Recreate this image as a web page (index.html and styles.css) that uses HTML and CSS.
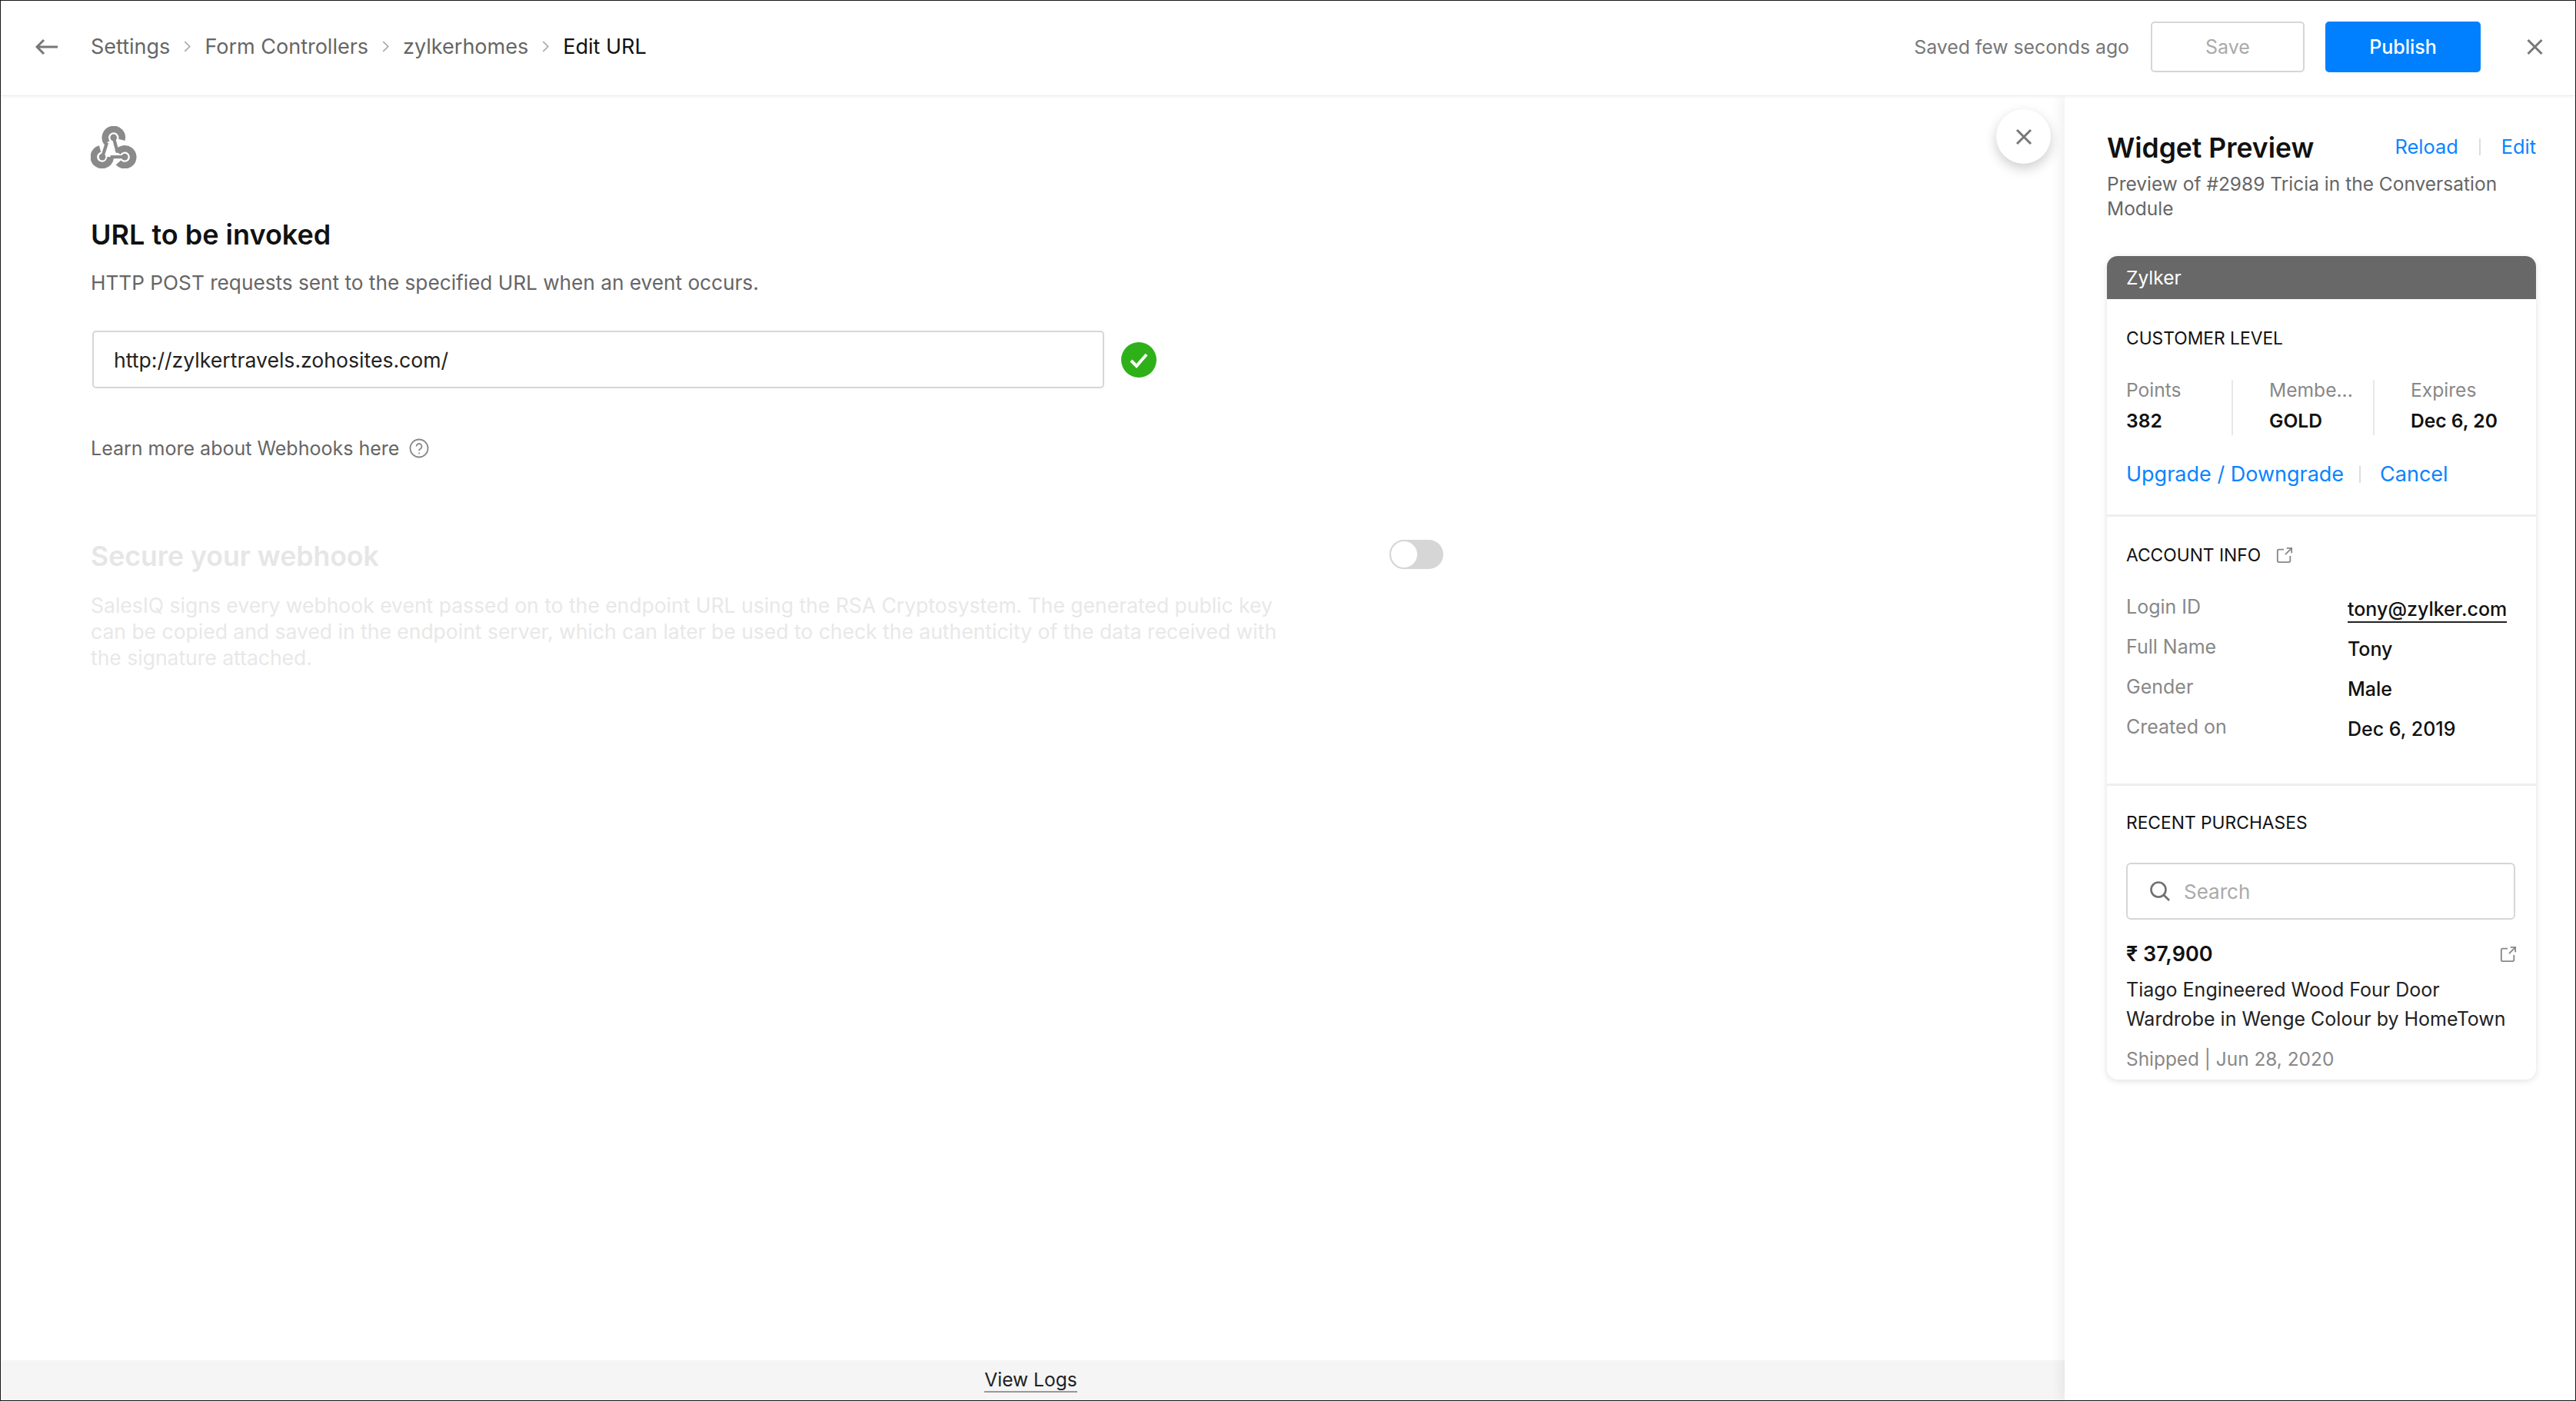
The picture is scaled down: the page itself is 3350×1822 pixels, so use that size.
FILE: index.html
```html
<!DOCTYPE html>
<html lang="en">
<head>
<meta charset="utf-8">
<title>Edit URL</title>
<link rel="stylesheet" href="styles.css">
</head>
<body>
<div class="app">
  <header class="topbar">
    <svg class="back" viewBox="0 0 30 24"><path d="M29 12H2M11 3l-9 9 9 9"/></svg>
    <nav class="crumbs">
      <span>Settings</span><svg class="chev" viewBox="0 0 8 14"><path d="M1 1l6 6-6 6"/></svg>
      <span>Form Controllers</span><svg class="chev" viewBox="0 0 8 14"><path d="M1 1l6 6-6 6"/></svg>
      <span>zylkerhomes</span><svg class="chev" viewBox="0 0 8 14"><path d="M1 1l6 6-6 6"/></svg>
      <span class="current">Edit URL</span>
    </nav>
    <span class="saved">Saved few seconds ago</span>
    <button class="btn btn-save">Save</button>
    <button class="btn btn-publish">Publish</button>
    <svg class="close-x" viewBox="0 0 22 22"><path d="M2 2l18 18M20 2L2 20"/></svg>
  </header>
  <div class="body">
    <main class="main">
      <div class="content">
        <svg class="hook" viewBox="173 72 180 166">
          <g class="hook-ring">
            <path d="M294 126A33 33 0 1 0 236 137"/>
            <path d="M209 161A33 33 0 1 0 250 193"/>
            <path d="M281 215A33 33 0 1 0 278 176"/>
          </g>
          <path class="hook-line" d="M236 137L218 193M250 193H306M278 176L262 117"/>
          <circle cx="262" cy="117" r="13"/><circle cx="218" cy="193" r="13"/><circle cx="306" cy="193" r="13"/>
        </svg>
        <h1 class="heading">URL to be invoked</h1>
        <p class="desc">HTTP POST requests sent to the specified URL when an event occurs.</p>
        <div class="url-row">
          <div class="url-input">http://zylkertravels.zohosites.com/</div>
          <svg class="ok" viewBox="0 0 46 46"><circle cx="23" cy="23" r="23"/><path d="M13 24l7 7 13-15"/></svg>
        </div>
        <p class="learn">Learn more about Webhooks here
          <svg class="help" viewBox="0 0 26 26"><circle cx="13" cy="13" r="11.5"/><path d="M9.5 10.5a3.5 3.5 0 1 1 5.4 3c-1.3.8-1.9 1.4-1.9 2.8"/><circle class="dot" cx="13" cy="19.5" r="1"/></svg>
        </p>
        <div class="secure">
          <div class="secure-head">
            <h2 class="heading muted">Secure your webhook</h2>
            <span class="toggle"><span class="knob"></span></span>
          </div>
          <p class="secure-text">SalesIQ signs every webhook event passed on to the endpoint URL using the RSA Cryptosystem. The generated public key can be copied and saved in the endpoint server, which can later be used to check the authenticity of the data received with the signature attached.</p>
        </div>
      </div>
      <button class="round-close"><svg viewBox="0 0 22 22"><path d="M2 2l18 18M20 2L2 20"/></svg></button>
      <footer class="logs"><a class="logs-link">View Logs</a></footer>
    </main>
    <aside class="side">
      <div class="side-head">
        <h2 class="side-title">Widget Preview</h2>
        <div class="side-links"><a>Reload</a><i class="sep"></i><a>Edit</a></div>
      </div>
      <p class="side-sub">Preview of #2989 Tricia in the Conversation Module</p>
      <div class="card">
        <div class="card-top">Zylker</div>
        <section class="sec sec-level">
          <h3 class="sec-title">CUSTOMER LEVEL</h3>
          <div class="stats">
            <div class="stat"><span class="label">Points</span><b>382</b></div>
            <div class="stat"><span class="label">Membe...</span><b>GOLD</b></div>
            <div class="stat"><span class="label">Expires</span><b>Dec 6, 20</b></div>
          </div>
          <div class="actions"><a>Upgrade / Downgrade</a><i class="sep"></i><a>Cancel</a></div>
        </section>
        <section class="sec sec-account">
          <h3 class="sec-title">ACCOUNT INFO
            <svg class="ext" viewBox="0 0 24 24"><path d="M11 4H4a2 2 0 0 0-2 2v14a2 2 0 0 0 2 2h14a2 2 0 0 0 2-2v-7M13 11L22 2M15 2h7v7"/></svg>
          </h3>
          <dl class="info">
            <dt>Login ID</dt><dd><span class="mail">tony@zylker.com</span></dd>
            <dt>Full Name</dt><dd>Tony</dd>
            <dt>Gender</dt><dd>Male</dd>
            <dt>Created on</dt><dd>Dec 6, 2019</dd>
          </dl>
        </section>
        <section class="sec sec-recent">
          <h3 class="sec-title">RECENT PURCHASES</h3>
          <div class="search">
            <svg class="search-ic" viewBox="0 0 26 26"><circle cx="11" cy="11" r="9.5"/><path d="M18 18l7 7"/></svg>
            <span>Search</span>
          </div>
          <div class="price-row"><b>₹ 37,900</b>
            <svg class="ext" viewBox="0 0 24 24"><path d="M11 4H4a2 2 0 0 0-2 2v14a2 2 0 0 0 2 2h14a2 2 0 0 0 2-2v-7M13 11L22 2M15 2h7v7"/></svg>
          </div>
          <p class="item">Tiago Engineered Wood Four Door Wardrobe in Wenge Colour by HomeTown</p>
          <p class="ship">Shipped | Jun 28, 2020</p>
        </section>
      </div>
    </aside>
  </div>
</div>
</body>
</html>
```
FILE: styles.css
```css
* { box-sizing: border-box; }
html, body { margin: 0; height: 100%; }
body { font-family: Inter, "Noto Sans", sans-serif; background: #fff; color: #111; }
h1, h2, h3, p, dl, dd { margin: 0; }
a { color: #0a84ff; }
button { font: inherit; }
svg { flex: none; fill: none; }

.app { width: 3350px; height: 1822px; border: 1px solid #1a1a1a; display: flex; flex-direction: column; overflow: hidden; }

.topbar { height: 124px; flex: none; display: flex; align-items: center; padding: 0 41px 4px 45px; border-bottom: 1px solid #ececec; box-shadow: 0 1px 4px rgba(0,0,0,.05); position: relative; z-index: 3; background: #fff; }
.back { width: 30px; height: 24px; margin-right: 42px; stroke: #777; stroke-width: 3; }
.crumbs { display: flex; align-items: center; gap: 18px; font-size: 27px; color: #666; flex: 1; }
.crumbs .current { color: #111; }
.chev { width: 9px; height: 15px; stroke: #aaa; stroke-width: 1.6; }
.saved { font-size: 24.8px; color: #777; margin-right: 28px; }
.btn { height: 66px; border-radius: 5px; font-size: 25px; }
.btn-save { width: 200px; background: #fff; border: 2px solid #d6d6d6; color: #aaa; margin-right: 27px; }
.btn-publish { width: 202px; background: #0080ff; border: 0; color: #fff; font-weight: 500; margin-right: 59px; }
.close-x { width: 23px; height: 22px; stroke: #777; stroke-width: 3; }

.body { flex: 1; display: flex; min-height: 0; }
.main { flex: 1; position: relative; display: flex; flex-direction: column; min-width: 0; }
.content { flex: 1; padding: 39px 0 0 117px; }
.hook { display: block; width: 60px; height: 55px; fill: #8a8a8a; }
.hook-ring { stroke: #8a8a8a; stroke-width: 26; fill: none; }
.hook-line { stroke: #8a8a8a; stroke-width: 13; fill: none; }

.heading { font-size: 36px; line-height: 44px; font-weight: 600; color: #111; }
.content > .heading { margin-top: 64px; }
.desc { font-size: 26.2px; line-height: 34px; color: #666; margin-top: 24px; }
.url-row { display: flex; align-items: center; gap: 22px; margin: 45px 0 0 2px; }
.url-input { width: 1316px; height: 75px; border: 2px solid #d6d6d6; border-radius: 5px; padding: 0 26px; display: flex; align-items: center; font-size: 26.6px; color: #222; }
.ok { width: 46px; height: 46px; }
.ok circle { fill: #2eb118; }
.ok path { stroke: #fff; stroke-width: 4; }
.learn { display: flex; align-items: center; gap: 13px; font-size: 25px; line-height: 34px; color: #666; margin-top: 61px; }
.help { width: 26px; height: 26px; stroke: #888; stroke-width: 1.8; }
.help .dot { fill: #888; stroke: none; }

.secure { width: 1759px; margin-top: 102px; }
.secure-head { display: flex; justify-content: space-between; align-items: center; }
.heading.muted { color: #e6e6e6; font-size: 35.6px; }
.toggle { width: 70px; height: 38px; border-radius: 19px; background: #d6d6d6; position: relative; margin-top: -6px; }
.knob { position: absolute; left: 0; top: 0; width: 38px; height: 38px; border-radius: 50%; background: #fff; border: 2px solid #d6d6d6; }
.secure-text { width: 1560px; font-size: 26.5px; line-height: 34px; color: #e8e8e8; margin-top: 24px; }

.round-close { position: absolute; left: 2595px; top: 17px; width: 71px; height: 71px; border-radius: 50%; border: 0; background: #fff; box-shadow: 0 6px 16px rgba(0,0,0,.2); display: flex; align-items: center; justify-content: center; padding: 0; }
.round-close svg { width: 24px; height: 22px; stroke: #777; stroke-width: 3; }

.logs { flex: none; height: 52px; background: #f5f5f5; display: flex; justify-content: center; align-items: center; padding-right: 5px; }
.logs-link { font-size: 24.6px; line-height: 29px; color: #222; border-bottom: 2px solid #999; }

.side { width: 664px; flex: none; padding: 46px 51px 0 55px; background: #fff; box-shadow: -6px 0 14px rgba(0,0,0,.06); position: relative; z-index: 2; }
.side-head { display: flex; justify-content: space-between; align-items: flex-start; }
.side-title { font-size: 35.5px; line-height: 44px; font-weight: 600; }
.side-links { display: flex; align-items: center; font-size: 25.4px; line-height: 34px; padding-top: 3px; }
.sep { display: block; width: 2px; height: 22px; background: #ddd; }
.side-links .sep { margin: 0 27px 0 27px; }
.side-sub { font-size: 24.5px; line-height: 32px; color: #666; margin-top: 8px; }
.card { margin-top: 46px; border-radius: 14px; box-shadow: 0 2px 8px rgba(0,0,0,.12); background: #fff; }
.card-top { height: 56px; background: #686868; color: #fff; border-radius: 14px 14px 0 0; padding: 0 25px; display: flex; align-items: center; font-size: 24.5px; }
.sec { padding: 0 25px; border-bottom: 3px solid #eee; }
.sec:last-child { border-bottom: 0; }
.sec-title { font-size: 22.8px; line-height: 30px; font-weight: 400; color: #111; display: flex; align-items: center; }
.sec-level { height: 283px; padding-top: 36px; }
.stats { display: flex; margin-top: 39px; height: 72px; }
.stat { display: flex; flex-direction: column; width: 184px; padding-left: 47px; border-left: 2px solid #e8e8e8; font-size: 24.6px; }
.stat:first-child { width: 137px; padding-left: 0; border-left: 0; }
.label { color: #888; line-height: 30px; margin-top: -2px; }
.stat b { font-weight: 600; line-height: 34px; margin-top: 8px; white-space: nowrap; }
.actions { display: flex; align-items: center; margin-top: 33px; font-size: 27px; line-height: 36px; }
.actions .sep { margin: 0 25px 0 20px; }
.sec-account { height: 350px; padding-top: 35px; }
.ext { width: 22px; height: 22px; stroke: #888; stroke-width: 2; }
.sec-account .ext { margin-left: 20px; }
.info { display: grid; grid-template-columns: 288px 1fr; grid-auto-rows: 52px; margin-top: 26px; font-size: 25px; align-items: center; }
.info dt { color: #888; }
.info dd { font-weight: 500; padding-top: 5px; }
.mail { border-bottom: 2px solid #222; padding-bottom: 1px; }
.sec-recent { padding-top: 33px; padding-bottom: 10px; }
.search { width: 506px; height: 74px; border: 2px solid #d6d6d6; border-radius: 6px; margin-top: 37px; display: flex; align-items: center; padding-left: 29px; font-size: 26px; color: #aaa; gap: 18px; }
.search-ic { width: 26px; height: 26px; stroke: #707070; stroke-width: 2.6; }
.price-row { display: flex; justify-content: space-between; align-items: center; margin-top: 28px; font-size: 27px; line-height: 34px; }
.price-row b { font-weight: 600; }
.item { width: 510px; font-size: 25px; line-height: 38px; color: #222; margin-top: 10px; }
.ship { font-size: 24.4px; line-height: 34px; color: #888; margin-top: 16px; }
```
